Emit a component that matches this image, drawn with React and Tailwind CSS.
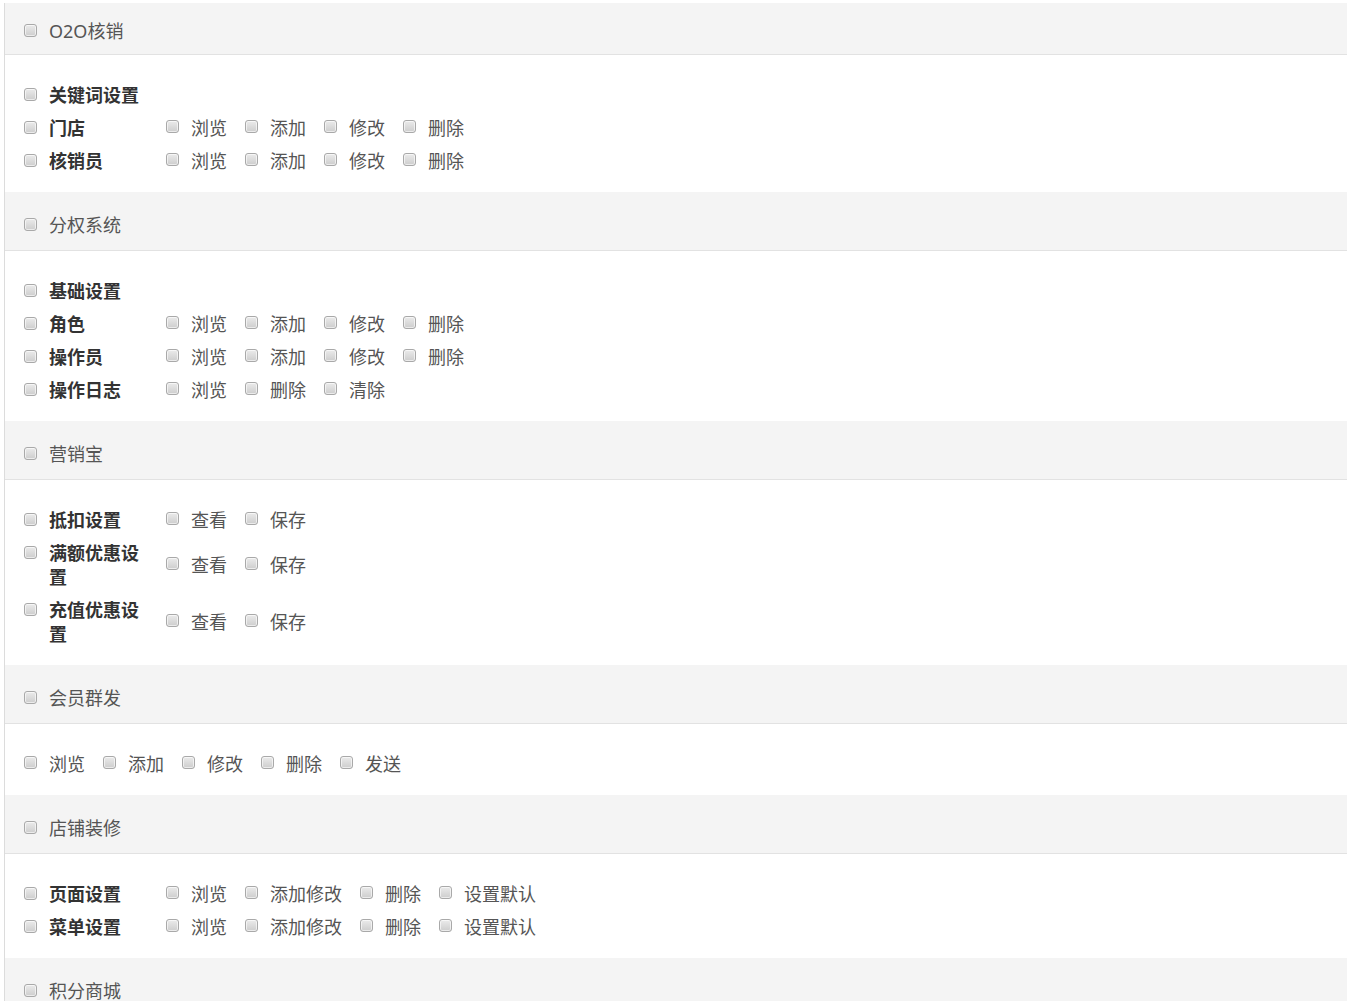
import React from "react";

const sections = [
  {
    title: "O2O核销",
    rows: [
      { label: "关键词设置", ops: [] },
      { label: "门店", ops: ["浏览", "添加", "修改", "删除"] },
      { label: "核销员", ops: ["浏览", "添加", "修改", "删除"] },
    ],
  },
  {
    title: "分权系统",
    rows: [
      { label: "基础设置", ops: [] },
      { label: "角色", ops: ["浏览", "添加", "修改", "删除"] },
      { label: "操作员", ops: ["浏览", "添加", "修改", "删除"] },
      { label: "操作日志", ops: ["浏览", "删除", "清除"] },
    ],
  },
  {
    title: "营销宝",
    rows: [
      { label: "抵扣设置", ops: ["查看", "保存"] },
      { label: "满额优惠设置", ops: ["查看", "保存"] },
      { label: "充值优惠设置", ops: ["查看", "保存"] },
    ],
  },
  {
    title: "会员群发",
    flat: ["浏览", "添加", "修改", "删除", "发送"],
  },
  {
    title: "店铺装修",
    rows: [
      { label: "页面设置", ops: ["浏览", "添加修改", "删除", "设置默认"] },
      { label: "菜单设置", ops: ["浏览", "添加修改", "删除", "设置默认"] },
    ],
  },
  { title: "积分商城", rows: [] },
];

// old-style grey checkbox
const Box = ({ className = "" }) => (
  <span
    className={`inline-block shrink-0 w-[13px] h-[13px] rounded-[3px] border border-[#a9a9a9] bg-gradient-to-b from-[#ebebeb] to-[#cdcdcd] shadow-[inset_0_0_0_1px_rgba(255,255,255,0.6)] ${className}`}
  />
);

const Option = ({ text }) => (
  <label className="flex items-center mr-[18px]">
    <Box className="mb-[3px]" />
    <span className="ml-[12px] text-[#555]">{text}</span>
  </label>
);

const Row = ({ row }) => (
  <div className="flex items-center py-[4.5px]">
    <div className="w-[142px] shrink-0 flex items-start">
      <Box className="mt-[5px]" />
      <span className="ml-[12px] w-[96px] font-bold text-[#333]">{row.label}</span>
    </div>
    <div className="flex items-center">
      {row.ops.map((op) => (
        <Option key={op} text={op} />
      ))}
    </div>
  </div>
);

const Section = ({ section, first }) => (
  <div>
    <div
      className={`flex items-start bg-[#f4f4f4] border-b border-[#e2e2e2] pl-[19px] ${
        first ? "h-[52px] pt-[16px]" : "h-[59px] pt-[21px]"
      }`}
    >
      <Box className="mt-[5px]" />
      <span className="ml-[12px] text-[#555]">{section.title}</span>
    </div>
    {section.flat ? (
      <div className="pt-[23px] pb-[15px] pl-[19px]">
        <div className="flex items-center py-[4.5px]">
          {section.flat.map((op) => (
            <Option key={op} text={op} />
          ))}
        </div>
      </div>
    ) : section.rows.length > 0 ? (
      <div className="pt-[23px] pb-[15px] pl-[19px]">
        {section.rows.map((row) => (
          <Row key={row.label} row={row} />
        ))}
      </div>
    ) : null}
  </div>
);

const App = () => {
  return (
    <div
      className="bg-white min-h-screen pt-[3px] text-[18px] leading-6"
      style={{ fontFamily: '"Noto Sans", "Noto Sans CJK SC", sans-serif' }}
    >
      <div className="ml-[4px] border-l border-[#dcdcdc]">
        {sections.map((s, i) => (
          <Section key={s.title} section={s} first={i === 0} />
        ))}
      </div>
    </div>
  );
};

export default App;
